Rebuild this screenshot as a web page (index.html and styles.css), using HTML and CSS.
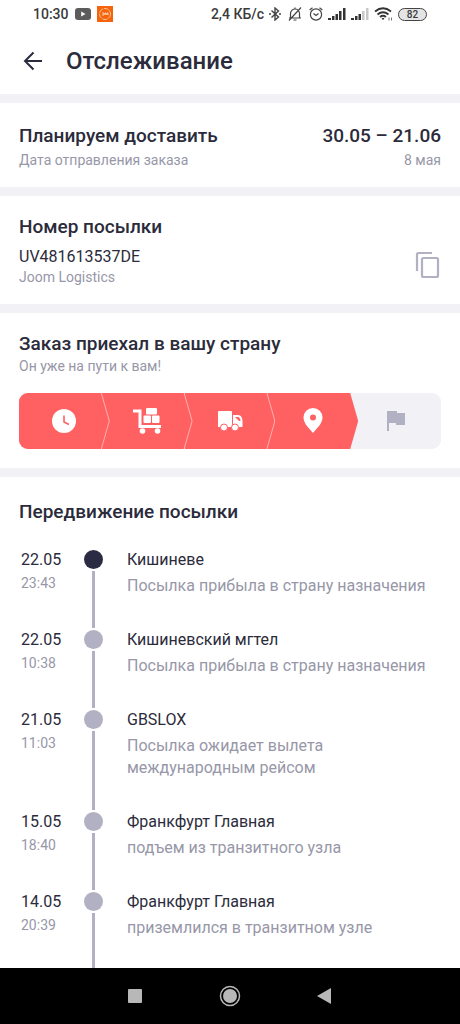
FILE: index.html
```
<!DOCTYPE html>
<html lang="ru">
<head>
<meta charset="utf-8">
<meta name="viewport" content="width=device-width, initial-scale=1">
<title>Отслеживание</title>
<link rel="stylesheet" href="styles.css">
</head>
<body>
<div class="statusbar">
  <div class="status-group">
    <span>10:30</span>
    <svg class="icon-video" viewBox="0 0 16 12" width="16" height="12"><rect width="16" height="12" rx="3" fill="#5c5c5c"/><path d="M6.2 3.5v5L10.500 6z" fill="#fff"/></svg>
    <svg viewBox="0 0 16 16" width="16" height="16"><rect width="16" height="16" fill="#f4640c"/><circle cx="8" cy="8" r="5.500" fill="none" stroke="#ffc69a" stroke-dasharray="5 1"/><path d="M5 7h2v2H5M8 9V7h1v2M10 9V7h1v2" fill="none" stroke="#ffe5d0" stroke-width=".8"/></svg>
  </div>
  <div class="status-group status-right">
    <span>2,4 КБ/с</span>
    <svg viewBox="0 0 12 14" width="12" height="14" fill="none" stroke="#444" stroke-width="1.400"><path d="M2.500 3.500l7 6.500L6 13V1l3.500 3-7 6.500"/><path d="M0 7h2M10 7h2"/></svg>
    <svg class="icon-bell" viewBox="0 0 14 14" width="14" height="14" fill="none" stroke="#444" stroke-width="1.200"><path d="M1 11h12M2.500 11V6.500a4.500 4.500 0 0 1 9 0V11M5.500 13h3M7 2V.5M1 13.500L13 .5"/></svg>
    <svg class="icon-alarm" viewBox="0 0 14 14" width="14" height="14" fill="none" stroke="#444" stroke-width="1.200"><circle cx="7" cy="7.500" r="5.600"/><path d="M4.500 6.500L7 8.500l2.500-2M.6 3L3.500.7M13.400 3L10.500.7"/></svg>
    <svg class="icon-signal" viewBox="0 0 18 12" width="18" height="12" fill="#333"><path d="M0 10h3v2H0zM4 8h2.500v4H4zM7.500 6H10v6H7.500zM11 3h2.500v9H11zM15 0h2.500v12H15z"/></svg>
    <svg class="icon-signal" viewBox="0 0 18 12" width="18" height="12" fill="#333"><path d="M0 10h3v2H0zM4 8h2.500v4H4zM7.500 6H10v6H7.500z"/><path d="M11 3h2.500v9H11zM15 0h2.500v12H15z" fill="#c8c8c8"/></svg>
    <svg class="icon-wifi" viewBox="0 0 19 14" width="19" height="14" fill="none" stroke="#333" stroke-width="1.800"><path d="M1 4.500q8-6.500 16 0M3.500 7.500q5.500-4.500 11 0M6 10q3-2.500 6 0"/><path d="M7.500 11.500L9 13l1.500-1.500L9 10.800z" fill="#333" stroke="none"/><path d="M15 10.500v3M17.500 10.500v3" stroke="#777" stroke-width="1"/></svg>
    <span class="battery">82</span>
  </div>
</div>

<header class="appbar">
  <button class="icon-button" type="button" aria-label="Назад">
    <svg viewBox="0 0 20 20" width="20" height="20" fill="none" stroke="#2b2b3f" stroke-width="2"><path d="M19 10H2M10.500 1.500L2 10l8.500 8.500"/></svg>
  </button>
  <h1>Отслеживание</h1>
</header>

<main>
  <section class="card delivery">
    <div class="pair"><h2>Планируем доставить</h2><strong>30.05 – 21.06</strong></div>
    <div class="pair note"><span>Дата отправления заказа</span><span>8 мая</span></div>
  </section>

  <section class="card parcel">
    <div>
      <h2>Номер посылки</h2>
      <p class="number">UV481613537DE</p>
      <p class="note">Joom Logistics</p>
    </div>
    <button class="icon-button" type="button" aria-label="Скопировать номер">
      <svg viewBox="0 0 28 28" width="28" height="28" fill="none" stroke="#b1b1c3" stroke-width="2.200"><path d="M4 20V3.500A1.500 1.500 0 0 1 5.500 2H19"/><rect x="9" y="7" width="16" height="19" rx="1.500"/></svg>
    </button>
  </section>

  <section class="card country">
    <h2>Заказ приехал в вашу страну</h2>
    <p class="note">Он уже на пути к вам!</p>
    <div class="steps">
      <div class="step done"><svg viewBox="0 0 28 28" width="28" height="28"><circle cx="14" cy="14" r="12" fill="#fff"/><path d="M14 8.500V15l5 2.500" fill="none" stroke="#ff6062" stroke-width="1.600"/></svg></div>
      <div class="step done"><svg viewBox="0 0 28 28" width="28" height="28" fill="#fff"><path d="M0 2.500h8.500V18H28v3H5.500V5.500H0z"/><rect x="13" y="1" width="11" height="6.500" rx="1"/><rect x="10.500" y="8.500" width="7.500" height="7.500" rx="1"/><rect x="19" y="8.500" width="7.500" height="7.500" rx="1"/><circle cx="9.500" cy="24" r="2.800"/><circle cx="24.500" cy="24" r="2.800"/></svg></div>
      <div class="step done"><svg viewBox="0 0 28 28" width="28" height="28"><path d="M3 4h12a1 1 0 0 1 1 1v15H2V5a1 1 0 0 1 1-1zM17 8h5c3 0 4.500 3 4.500 6v6H17z" fill="#fff"/><path d="M19 10h2.500c2 0 3 2 3 4H19z" fill="#ff6062"/><path d="M19 10l4 4h-4z" fill="#fff"/><g fill="#fff" stroke="#ff6062"><circle cx="8" cy="20.500" r="3.500"/><circle cx="19" cy="20.500" r="3.500"/></g></svg></div>
      <div class="step done"><svg viewBox="0 0 28 28" width="28" height="28"><path d="M14 1a9.500 9.500 0 0 0-9.500 9.500C4.500 17 11 22 14 26c3-4 9.500-9 9.500-15.500A9.500 9.500 0 0 0 14 1z" fill="#fff"/><circle cx="14" cy="10.500" r="3" fill="#ff6062"/></svg></div>
      <div class="step"><svg viewBox="0 0 28 28" width="28" height="28"><path d="M5 4h10v2h8v12h-9v-2H7v8H5z" fill="#b1b1c3"/></svg></div>
    </div>
  </section>

  <section class="card movement">
    <h2>Передвижение посылки</h2>
    <ol class="timeline">
      <li class="event current">
        <div class="when"><p class="date">22.05</p><p class="note">23:43</p></div>
        <div class="rail"></div>
        <div class="what"><h3>Кишиневе</h3><p>Посылка прибыла в страну назначения</p></div>
      </li>
      <li class="event">
        <div class="when"><p class="date">22.05</p><p class="note">10:38</p></div>
        <div class="rail"></div>
        <div class="what"><h3>Кишиневский мгтел</h3><p>Посылка прибыла в страну назначения</p></div>
      </li>
      <li class="event">
        <div class="when"><p class="date">21.05</p><p class="note">11:03</p></div>
        <div class="rail"></div>
        <div class="what"><h3>GBSLOX</h3><p>Посылка ожидает вылета международным рейсом</p></div>
      </li>
      <li class="event">
        <div class="when"><p class="date">15.05</p><p class="note">18:40</p></div>
        <div class="rail"></div>
        <div class="what"><h3>Франкфурт Главная</h3><p>подъем из транзитного узла</p></div>
      </li>
      <li class="event">
        <div class="when"><p class="date">14.05</p><p class="note">20:39</p></div>
        <div class="rail"></div>
        <div class="what"><h3>Франкфурт Главная</h3><p>приземлился в транзитном узле</p></div>
      </li>
    </ol>
  </section>
</main>

<nav class="navbar">
  <button class="icon-button" type="button" aria-label="Недавние"><svg viewBox="0 0 22 22" width="22" height="22"><rect x="4" y="4" width="14" height="14" rx="1" fill="#b8b8b8"/></svg></button>
  <button class="icon-button" type="button" aria-label="Домой"><svg viewBox="0 0 22 22" width="22" height="22"><circle cx="11" cy="11" r="9.500" fill="none" stroke="#b8b8b8" stroke-width="1.500"/><circle cx="11" cy="11" r="7" fill="#b8b8b8"/></svg></button>
  <button class="icon-button" type="button" aria-label="Назад в системе"><svg viewBox="0 0 22 22" width="22" height="22"><path d="M3 11l14-8v16z" fill="#b8b8b8"/></svg></button>
</nav>
</body>
</html>
```
FILE: styles.css
```
* {
  box-sizing: border-box;
}

body {
  margin: 0;
  min-height: 100vh;
  display: flex;
  flex-direction: column;
  background: #fff;
  color: #2b2b3b;
  font-family: Roboto, "Noto Sans", sans-serif;
  font-size: 16px;
  line-height: 22px;
}

h1, h2, h3, p, ol {
  margin: 0;
  padding: 0;
}

svg {
  display: block;
  flex: none;
}

.icon-button {
  display: block;
  padding: 0;
  border: 0;
  background: none;
}

.statusbar {
  display: flex;
  justify-content: space-between;
  height: 28px;
  padding: 0 33px;
  color: #3a3a3a;
  font-size: 14px;
  font-weight: 500;
}

.status-group {
  display: flex;
  align-items: center;
  gap: 6px;
}

.status-right {
  gap: 5px;
}

.icon-bell,
.icon-alarm {
  margin-left: 2px;
}

.battery {
  width: 29px;
  height: 13px;
  border: 1px solid #444;
  border-radius: 7px;
  background: #e4e4e4;
  font-size: 10px;
  line-height: 11px;
  text-align: center;
}

.appbar {
  display: flex;
  align-items: center;
  gap: 23px;
  height: 66px;
  padding: 0 23px;
}

h1 {
  font-size: 24px;
  font-weight: 500;
  line-height: 32px;
}

main {
  flex: 1;
  display: flex;
  flex-direction: column;
}

.card {
  padding: 20px 19px;
  border-top: 9px solid #f1f1f6;
}

h2, strong {
  font-size: 19px;
  font-weight: 500;
  line-height: 24px;
}

.note {
  color: #9797a8;
  font-size: 14px;
  line-height: 20px;
}

.pair {
  display: flex;
  justify-content: space-between;
  gap: 16px;
}

.delivery {
  padding-top: 21px;
  padding-bottom: 17px;
}

.pair.note {
  margin-top: 2px;
}

.parcel {
  display: flex;
  align-items: center;
  justify-content: space-between;
  padding-top: 19px;
  padding-bottom: 17px;
}

.number {
  margin-top: 8px;
  line-height: 20px;
}

.parcel .icon-button {
  margin-top: 28px;
}

.country {
  padding-top: 19px;
  padding-bottom: 19px;
}

.steps {
  display: flex;
  height: 56px;
  margin-top: 17px;
  border-radius: 9px;
  background: #f1f1f6;
  overflow: hidden;
  isolation: isolate;
}

.step {
  flex: 1;
  position: relative;
  display: flex;
  align-items: center;
  justify-content: center;
}

.step.done {
  margin-right: -8px;
  background: #ffb0b0;
  clip-path: polygon(0 0, calc(100% - 8px) 0, 100% 50%, calc(100% - 8px) 100%, 0 100%);
}

.step.done::before {
  content: "";
  position: absolute;
  inset: 0 1px 0 0;
  z-index: -1;
  background: #ff6062;
  clip-path: polygon(0 0, calc(100% - 8px) 0, 100% 50%, calc(100% - 8px) 100%, 0 100%);
}

.step:nth-child(1) { z-index: 4; }
.step:nth-child(2) { z-index: 3; }
.step:nth-child(3) { z-index: 2; }
.step:nth-child(4) { z-index: 1; background: #ff6062; }

.movement {
  flex: 1;
  display: flex;
  flex-direction: column;
  padding-top: 23px;
  padding-bottom: 0;
}

.timeline {
  flex: 1;
  display: flex;
  flex-direction: column;
  margin-top: 24px;
  list-style: none;
}

.event {
  display: grid;
  grid-template-columns: 63px 19px 1fr;
  padding-left: 2px;
}

.event:last-child {
  flex: 1;
}

.date {
  line-height: 24px;
}

.when .note {
  margin-top: 1px;
}

.rail {
  display: flex;
  flex-direction: column;
  align-items: center;
  gap: 2px;
}

.rail::before {
  content: "";
  width: 19px;
  height: 19px;
  margin-top: 2px;
  border-radius: 50%;
  background: #b1b1c3;
}

.current .rail::before {
  background: #2b2b43;
}

.rail::after {
  content: "";
  flex: 1;
  width: 3px;
  background: #b1b1c3;
}

.what {
  padding: 0 0 31px 24px;
  color: #9797a8;
}

.event:last-child .what {
  padding-bottom: 24px;
}

h3 {
  margin-bottom: 3px;
  color: #2b2b3b;
  font-size: 16px;
  font-weight: 400;
  line-height: 24px;
}

.navbar {
  display: flex;
  align-items: center;
  justify-content: center;
  gap: 73px;
  height: 56px;
  background: #000;
}
```
